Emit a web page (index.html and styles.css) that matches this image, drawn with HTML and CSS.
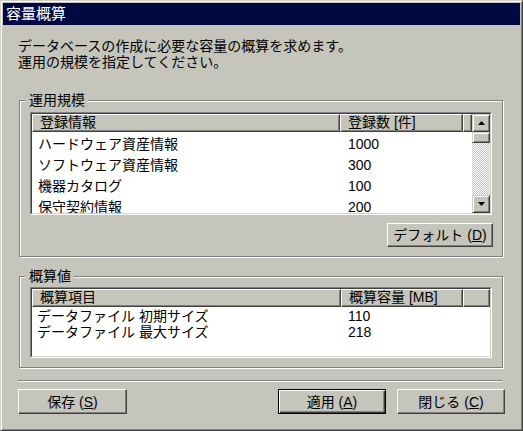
FILE: index.html
```html
<!DOCTYPE html>
<html lang="ja">
<head>
<meta charset="utf-8">
<title>容量概算</title>
<link rel="stylesheet" href="styles.css">
</head>
<body>
<div class="window">
  <div class="titlebar">容量概算</div>
  <div class="client">
    <p class="desc">データベースの作成に必要な容量の概算を求めます。<br>運用の規模を指定してください。</p>

    <fieldset class="group group-scale">
      <legend>運用規模</legend>
      <div class="list list-scale">
        <div class="list-inner">
          <div class="list-main">
            <div class="list-head cols-scale">
              <div class="hcell">登録情報</div>
              <div class="hcell">登録数 [件]</div>
              <div class="hcell"></div>
            </div>
            <div class="list-body body-scale">
              <div class="list-row cols-scale"><span class="c1">ハードウェア資産情報</span><span class="c2">1000</span></div>
              <div class="list-row cols-scale"><span class="c1">ソフトウェア資産情報</span><span class="c2">300</span></div>
              <div class="list-row cols-scale"><span class="c1">機器カタログ</span><span class="c2">100</span></div>
              <div class="list-row cols-scale"><span class="c1">保守契約情報</span><span class="c2">200</span></div>
            </div>
          </div>
          <div class="scrollbar">
            <div class="sb-btn"><svg width="7" height="4" viewBox="0 0 7 4"><path d="M3.5 0 L7 4 L0 4 Z" fill="#000"/></svg></div>
            <div class="sb-thumb"></div>
            <div class="sb-track"></div>
            <div class="sb-btn"><svg width="7" height="4" viewBox="0 0 7 4"><path d="M0 0 L7 0 L3.5 4 Z" fill="#000"/></svg></div>
          </div>
        </div>
      </div>
      <div class="group-actions">
        <button class="btn btn-default-values">デフォルト (<u>D</u>)</button>
      </div>
    </fieldset>

    <fieldset class="group group-estimate">
      <legend>概算値</legend>
      <div class="list list-estimate">
        <div class="list-inner">
          <div class="list-main">
            <div class="list-head cols-estimate">
              <div class="hcell">概算項目</div>
              <div class="hcell">概算容量 [MB]</div>
              <div class="hcell"></div>
            </div>
            <div class="list-body body-estimate">
              <div class="list-row cols-estimate"><span class="c1">データファイル 初期サイズ</span><span class="c2">110</span></div>
              <div class="list-row cols-estimate"><span class="c1">データファイル 最大サイズ</span><span class="c2">218</span></div>
            </div>
          </div>
        </div>
      </div>
    </fieldset>

    <div class="separator"></div>

    <div class="buttons">
      <button class="btn">保存 (<u>S</u>)</button>
      <button class="btn btn-primary push">適用 (<u>A</u>)</button>
      <button class="btn">閉じる (<u>C</u>)</button>
    </div>
  </div>
</div>
</body>
</html>
```

FILE: styles.css
```css
* { box-sizing: border-box; }

html, body {
  margin: 0;
  padding: 0;
  background: #c5c5bb;
}

body {
  font-family: "Liberation Sans", "Noto Sans CJK JP", sans-serif;
  font-size: 14px;
  color: #000;
}

.window {
  width: 523px;
  height: 431px;
  background: #c5c5bb;
  border: 1px solid;
  border-color: #d4d0c8 #404040 #404040 #d4d0c8;
  box-shadow: inset 1px 1px 0 #fff, inset -1px -1px 0 #808080;
  padding: 2px;
  display: flex;
  flex-direction: column;
}

.titlebar {
  height: 22px;
  line-height: 22px;
  background: #000a40;
  color: #fff;
  font-size: 15px;
  padding-left: 3px;
}

.client {
  padding: 0 14px 0 15px;
}

.desc {
  margin: 13px 0 0 0;
  line-height: 16px;
  font-size: 14px;
}

.group {
  margin: 0 0 0 1px;
  width: 484px;
  min-width: 0;
  border: 1px solid #808080;
  box-shadow: inset 1px 1px 0 #fff, 1px 1px 0 #fff;
  padding: 4px 10px 9px 10px;
}

.group legend {
  font-size: 14px;
  line-height: 16px;
  padding: 0 3px 0 4px;
  margin-left: -5px;
  background: #c5c5bb;
}

.group-scale { margin-top: 22px; }
.group-estimate { margin-top: 11px; padding-top: 3px; }

.list {
  width: 462px;
  border: 1px solid;
  border-color: #808080 #fff #fff #808080;
}

.list-scale { height: 103px; }
.list-estimate { height: 71px; }

.list-inner {
  height: 100%;
  border: 1px solid;
  border-color: #404040 #d4d0c8 #d4d0c8 #404040;
  background: #fff;
  display: flex;
}

.list-main {
  flex: 1;
  min-width: 0;
  overflow: hidden;
}

.list-head {
  height: 18px;
}

.cols-scale { display: grid; grid-template-columns: 308px 123px 1fr; }
.cols-estimate { display: grid; grid-template-columns: 309px 122px 1fr; }

.hcell {
  background: #c5c5bb;
  border: 1px solid;
  border-color: #fff #404040 #404040 #fff;
  box-shadow: inset -1px -1px 0 #808080;
  line-height: 15px;
  padding-left: 7px;
  white-space: nowrap;
  overflow: hidden;
}

.list-row {
  white-space: nowrap;
}

.body-scale { padding-top: 2px; }
.body-scale .list-row { height: 21px; line-height: 21px; }

.body-estimate { padding-top: 1px; }
.body-estimate .list-row { height: 16px; line-height: 16px; }

.body-scale .c1 { padding-left: 6px; }
.body-estimate .c1 { padding-left: 5px; }
.c2 { padding-left: 8px; }
.body-estimate .c2 { padding-left: 7px; }

.scrollbar {
  width: 18px;
  display: flex;
  flex-direction: column;
}

.sb-btn, .sb-thumb {
  background: #c5c5bb;
  border: 1px solid;
  border-color: #d4d0c8 #404040 #404040 #d4d0c8;
  box-shadow: inset 1px 1px 0 #fff, inset -1px -1px 0 #808080;
}

.sb-btn {
  height: 18px;
  display: flex;
  align-items: center;
  justify-content: center;
}

.sb-thumb { height: 11px; }

.sb-track {
  flex: 1;
  background-color: #c5c5bb;
  background-image: conic-gradient(#fff 25%, #c5c5bb 0 50%, #fff 0 75%, #c5c5bb 0);
  background-size: 2px 2px;
}

.group-actions {
  display: flex;
  justify-content: flex-end;
  margin-top: 8px;
  margin-right: -1px;
}

.btn {
  font-family: "Liberation Sans", "Noto Sans CJK JP", sans-serif;
  font-size: 14px;
  color: #000;
  background: #c5c5bb;
  border: 1px solid;
  border-color: #fff #404040 #404040 #fff;
  box-shadow: inset -1px -1px 0 #808080;
  height: 25px;
  width: 108px;
  padding: 0;
  line-height: 20px;
}

.btn u { text-underline-offset: 1px; }

.btn-default-values {
  width: 106px;
  height: 24px;
}

.btn-primary {
  border-color: #000;
  box-shadow: inset 1px 1px 0 #fff, inset -1px -1px 0 #404040, inset -2px -2px 0 #808080;
}

.separator {
  width: 484px;
  margin-top: 12px;
  border-top: 1px solid #808080;
  border-bottom: 1px solid #fff;
}

.buttons {
  display: flex;
  margin-top: 7px;
  gap: 11px;
  padding-right: 1px;
}

.buttons .btn:first-child { width: 109px; }
.buttons .push { margin-left: auto; }
```
